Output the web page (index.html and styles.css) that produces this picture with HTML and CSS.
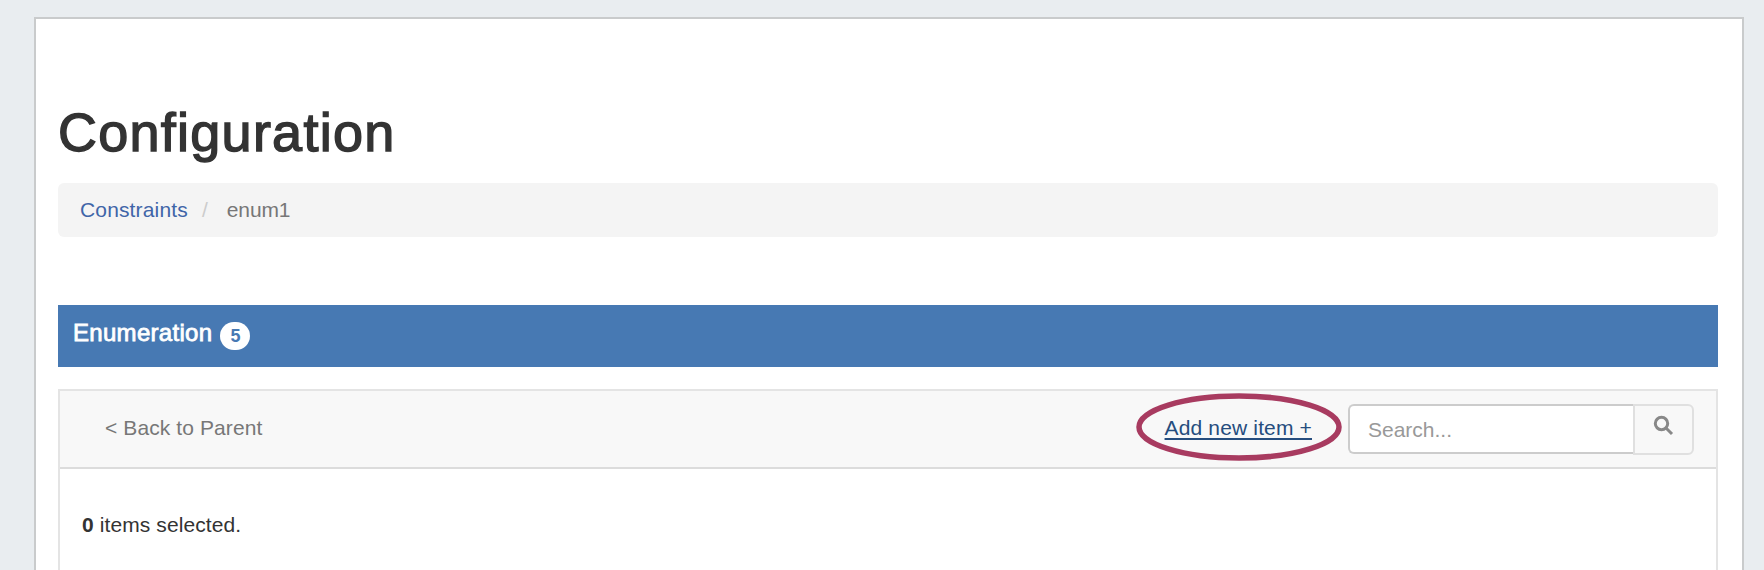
FILE: index.html
```html
<!DOCTYPE html>
<html lang="en">
<head>
<meta charset="utf-8">
<title>Configuration</title>
<link rel="stylesheet" href="styles.css">
</head>
<body>
<main class="card">
  <h1 class="title">Configuration</h1>
  <nav class="crumbs">
    <a class="crumb-link" href="#">Constraints</a>
    <span class="crumb-sep">/</span>
    <span class="crumb-current">enum1</span>
  </nav>
  <header class="banner">
    <span class="banner-title">Enumeration</span>
    <span class="badge">5</span>
  </header>
  <section class="panel">
    <div class="toolbar">
      <a class="back" href="#">&lt; Back to Parent</a>
      <div class="tools">
        <a class="add" href="#">Add new item +
          <svg class="circle" viewBox="0 0 206 68" aria-hidden="true"><ellipse cx="103" cy="34" rx="100" ry="31"/></svg>
        </a>
        <div class="search">
          <input class="search-input" type="text" placeholder="Search...">
          <button class="search-btn" type="button" aria-label="Search">
            <svg class="search-icon" viewBox="0 0 21 21" aria-hidden="true"><circle cx="8.5" cy="8.5" r="6.2"/><path d="M13 13l6 6"/></svg>
          </button>
        </div>
      </div>
    </div>
    <div class="panel-body"><b>0</b> items selected.</div>
  </section>
</main>
</body>
</html>
```
FILE: styles.css
```css
* { box-sizing: border-box; }
html, body { height: 570px; overflow: hidden; }
body {
  margin: 0;
  padding: 17px 20px 0 34px;
  background: #e9edf0;
  font-family: "Liberation Sans", Arial, sans-serif;
  font-size: 21px;
  color: #333;
}
a { text-decoration: none; }
.card {
  height: 553px;
  padding: 0 24px 0 22px;
  background: #fff;
  border: 2px solid #c9cbcc;
  border-bottom: 0;
}
.title {
  margin: 0;
  padding: 80px 0 18px;
  font-size: 54px;
  line-height: 66px;
  font-weight: 400;
  letter-spacing: 1.25px;
  -webkit-text-stroke: 1.4px #333;
  color: #333;
}
.crumbs {
  display: flex;
  align-items: center;
  height: 54px;
  padding: 0 22px;
  background: #f4f4f4;
  border-radius: 6px;
}
.crumb-link { color: #3f65a8; letter-spacing: 0.15px; }
.crumb-sep { margin: 0 19px 0 14px; color: #ccc; }
.crumb-current { color: #777; letter-spacing: -0.1px; }
.banner {
  display: flex;
  align-items: center;
  height: 62px;
  margin-top: 68px;
  padding: 0 15px;
  background: #4779b3;
  color: #fff;
}
.banner-title {
  padding-bottom: 6px;
  font-size: 24px;
  letter-spacing: 0.3px;
  -webkit-text-stroke: 0.8px #fff;
  margin-right: 8px;
}
.badge {
  display: flex;
  align-items: center;
  justify-content: center;
  width: 30px;
  height: 28px;
  border-radius: 14px;
  background: #fff;
  color: #4779b3;
  font-size: 18px;
  font-weight: 700;
}
.panel {
  height: 181px;
  margin-top: 22px;
  border: 2px solid #e4e4e4;
  border-bottom: 0;
}
.toolbar {
  display: flex;
  align-items: center;
  justify-content: space-between;
  height: 78px;
  padding: 0 22px 0 45px;
  background: #f8f8f8;
  border-bottom: 2px solid #dcdcdc;
}
.back { padding-bottom: 3px; color: #777; letter-spacing: 0.1px; }
.tools { display: flex; align-items: center; }
.add {
  position: relative;
  padding-bottom: 3px;
  margin-right: 36px;
  color: #264d7e;
  letter-spacing: 0.15px;
  text-decoration: underline;
  text-underline-offset: 3px;
}
.circle {
  position: absolute;
  left: -29px;
  top: -23px;
  width: 206px;
  height: 68px;
  overflow: visible;
}
.circle ellipse { fill: none; stroke: #a83b60; stroke-width: 5.5; }
.search { display: flex; align-items: flex-start; }
.search-input {
  width: 285px;
  height: 50px;
  padding: 2px 18px 0;
  border: 2px solid #ccc;
  border-right: 0;
  border-radius: 6px 0 0 6px;
  background: #fff;
  font: inherit;
  color: #333;
}
.search-input::placeholder { color: #999; opacity: 1; }
.search-btn {
  display: flex;
  align-items: center;
  justify-content: center;
  width: 61px;
  height: 51px;
  padding: 0 0 7px;
  border: 2px solid #e0e0e0;
  border-radius: 0 6px 6px 0;
  background: #f8f8f8;
}
.search-icon { width: 21px; height: 21px; fill: none; stroke: #888; stroke-width: 3; }
.panel-body { padding: 41px 22px; line-height: 30px; letter-spacing: 0.1px; }
```
